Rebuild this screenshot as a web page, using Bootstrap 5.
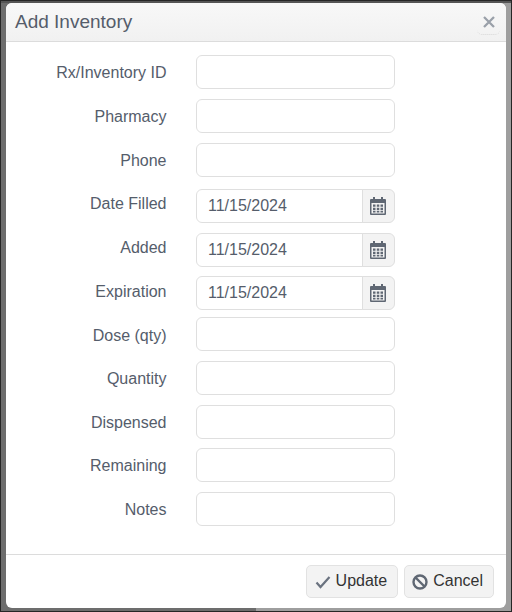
<!DOCTYPE html>
<html lang="en">
<head>
<meta charset="utf-8">
<title>Add Inventory</title>
<link href="https://cdn.jsdelivr.net/npm/bootstrap@5.3.0/dist/css/bootstrap.min.css" rel="stylesheet">
<style>
html,body{height:100%;margin:0;background:#262626;overflow:hidden}
body{font-family:"Liberation Sans",Arial,sans-serif;font-size:16px;color:#555d6b}
.backdrop-area{height:610px;margin:1px 1px 0 1px;padding:0 5px 2px 5px;border-top:2px solid #555;background:linear-gradient(90deg,#6d6d6d 0,#6d6d6d 50%,#9e9e9e 50%,#9e9e9e 100%)}
.dlg{height:605px;background:#fff;border-radius:6px;display:flex;flex-direction:column;overflow:hidden}
.dlg-head{height:39px;flex:none;background:linear-gradient(#f8f8f8,#f1f1f1);border-bottom:1px solid #dcdcdc;padding:0 6px 0 9px}
.dlg-title{font-size:19px;color:#555d6b;margin:0;font-weight:400;line-height:38px}
.x-btn{width:23px;height:25px;background:none;border:0;padding:0;margin-top:7px;display:flex;align-items:center;justify-content:center;border-bottom:1px dotted #d5d5d5;border-radius:0 0 5px 5px}
.dlg-body{flex:1;padding-top:13px}
.frow{height:34px;margin-bottom:10px;display:flex}
.frow.t12{margin-bottom:12px}
.frow.t9{margin-bottom:9px}
.frow.t7{margin-bottom:7px}
.flabel{width:160.5px;text-align:right;color:#555d6b;line-height:36px;margin:0;flex:none}
.lift{line-height:30px}
.lift2{line-height:32px}
.drop{line-height:38px}
.fctl{margin-left:29.5px;width:199px;flex:none}
.fctl .form-control{height:34px;border-color:#dfdfdf;border-radius:6px;font-size:16px;color:#555d6b;padding:4px 11px;box-shadow:none}
.fctl .input-group-text{width:33px;padding:0 2px 0 0;justify-content:center;background:#f3f3f3;border-color:#dfdfdf;border-radius:0 6px 6px 0}
.dlg-foot{height:54px;flex:none;border-top:1px solid #dcdcdc;padding:10px 12px 0 0;gap:6px}
.act-btn{height:33px;background:#f3f3f3;border:1px solid #e2e2e2;border-radius:5px;color:#333;font-size:16px;padding:0 10px 2px 8px;display:flex;align-items:center;gap:5px;line-height:1}
.act-btn.narrow{padding-left:7px}
.act-btn svg{position:relative;top:1px}
</style>
</head>
<body>
<div class="backdrop-area">
<div class="dlg">
  <div class="dlg-head d-flex justify-content-between align-items-start">
    <h5 class="dlg-title">Add Inventory</h5>
    <button class="x-btn" type="button" aria-label="Close">
      <svg width="12" height="12" viewBox="0 0 12 12"><path d="M1 1L11 11M11 1L1 11" stroke="#9aa0a9" stroke-width="2.300"/></svg>
    </button>
  </div>
  <div class="dlg-body">
    <div class="frow"><label class="flabel">Rx/Inventory ID</label><div class="fctl"><input class="form-control" type="text"></div></div>
    <div class="frow"><label class="flabel">Pharmacy</label><div class="fctl"><input class="form-control" type="text"></div></div>
    <div class="frow t12"><label class="flabel">Phone</label><div class="fctl"><input class="form-control" type="text"></div></div>
    <div class="frow"><label class="flabel lift">Date Filled</label><div class="fctl"><div class="input-group"><input class="form-control" type="text" value="11/15/2024"><span class="input-group-text"><svg width="16" height="18" viewBox="0 0 16 18"><path d="M3 0h2v3H3zM11 0h2v3h-2z" fill="#5f6773"/><path fill-rule="evenodd" d="M1 2h14a1 1 0 0 1 1 1v14a1 1 0 0 1-1 1H1a1 1 0 0 1-1-1V3a1 1 0 0 1 1-1zM1.500 6v10.500h13V6zM3 7.500h2.500v2.300H3zM6.800 7.500h2.500v2.300H6.800zM10.500 7.500H13v2.300h-2.500zM3 10.800h2.500v2.300H3zM6.800 10.800h2.500v2.300H6.800zM10.500 10.800H13v2.300h-2.500zM3 13.800h2.500V15.500H3zM6.800 13.800h2.500V15.500H6.800zM10.500 13.800H13V15.500h-2.500z" fill="#5f6773"/></svg></span></div></div></div>
    <div class="frow t9"><label class="flabel lift">Added</label><div class="fctl"><div class="input-group"><input class="form-control" type="text" value="11/15/2024"><span class="input-group-text"><svg width="16" height="18" viewBox="0 0 16 18"><path d="M3 0h2v3H3zM11 0h2v3h-2z" fill="#5f6773"/><path fill-rule="evenodd" d="M1 2h14a1 1 0 0 1 1 1v14a1 1 0 0 1-1 1H1a1 1 0 0 1-1-1V3a1 1 0 0 1 1-1zM1.500 6v10.500h13V6zM3 7.500h2.500v2.300H3zM6.800 7.500h2.500v2.300H6.800zM10.500 7.500H13v2.300h-2.500zM3 10.800h2.500v2.300H3zM6.800 10.800h2.500v2.300H6.800zM10.500 10.800H13v2.300h-2.500zM3 13.800h2.500V15.500H3zM6.800 13.800h2.500V15.500H6.800zM10.500 13.800H13V15.500h-2.500z" fill="#5f6773"/></svg></span></div></div></div>
    <div class="frow t7"><label class="flabel lift2">Expiration</label><div class="fctl"><div class="input-group"><input class="form-control" type="text" value="11/15/2024"><span class="input-group-text"><svg width="16" height="18" viewBox="0 0 16 18"><path d="M3 0h2v3H3zM11 0h2v3h-2z" fill="#5f6773"/><path fill-rule="evenodd" d="M1 2h14a1 1 0 0 1 1 1v14a1 1 0 0 1-1 1H1a1 1 0 0 1-1-1V3a1 1 0 0 1 1-1zM1.500 6v10.500h13V6zM3 7.500h2.500v2.300H3zM6.800 7.500h2.500v2.300H6.800zM10.500 7.500H13v2.300h-2.500zM3 10.800h2.500v2.300H3zM6.800 10.800h2.500v2.300H6.800zM10.500 10.800H13v2.300h-2.500zM3 13.800h2.500V15.500H3zM6.800 13.800h2.500V15.500H6.800zM10.500 13.800H13V15.500h-2.500z" fill="#5f6773"/></svg></span></div></div></div>
    <div class="frow"><label class="flabel drop">Dose (qty)</label><div class="fctl"><input class="form-control" type="text"></div></div>
    <div class="frow"><label class="flabel">Quantity</label><div class="fctl"><input class="form-control" type="text"></div></div>
    <div class="frow t9"><label class="flabel">Dispensed</label><div class="fctl"><input class="form-control" type="text"></div></div>
    <div class="frow"><label class="flabel">Remaining</label><div class="fctl"><input class="form-control" type="text"></div></div>
    <div class="frow"><label class="flabel">Notes</label><div class="fctl"><input class="form-control" type="text"></div></div>
  </div>
  <div class="dlg-foot d-flex justify-content-end">
    <button class="act-btn" type="button"><svg width="16" height="14" viewBox="0 0 16 14"><path d="M1.500 7.500L5.500 12L14.500 2" fill="none" stroke="#6b7380" stroke-width="2.200"/></svg>Update</button>
    <button class="act-btn narrow" type="button"><svg width="16" height="16" viewBox="0 0 16 16"><circle cx="8" cy="8" r="6.500" fill="none" stroke="#5f6773" stroke-width="2.400"/><path d="M3.500 3.500L12.500 12.500" stroke="#5f6773" stroke-width="2.400"/></svg>Cancel</button>
  </div>
</div>
</div>
</body>
</html>
